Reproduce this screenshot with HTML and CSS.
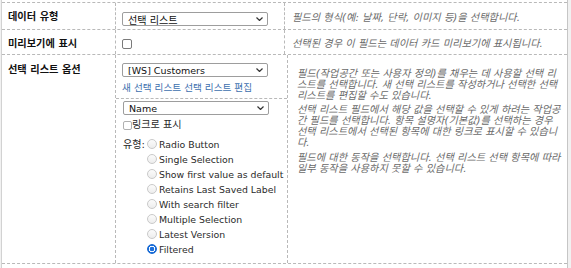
FILE: index.html
```html
<!DOCTYPE html>
<html lang="ko">
<head>
<meta charset="utf-8">
<link rel="stylesheet" href="styles.css">
</head>
<body>
<div class="frame">
  <div class="row row1">
    <div class="label">데이터 유형</div>
    <div class="mid">
      <div class="select"><span class="ko">선택 리스트</span><svg class="chev" width="7" height="4" viewBox="0 0 7 4"><polyline points="0.5,0.5 3.5,3.5 6.5,0.5"/></svg></div>
    </div>
    <div class="desc"><p>필드의 형식(예: 날짜, 단락, 이미지 등)을 선택합니다.</p></div>
  </div>
  <div class="row row2">
    <div class="label">미리보기에 표시</div>
    <div class="mid"><span class="checkbox"></span></div>
    <div class="desc"><p>선택된 경우 이 필드는 데이터 카드 미리보기에 표시됩니다.</p></div>
  </div>
  <div class="row row3">
    <div class="label">선택 리스트 옵션</div>
    <div class="mid">
      <div class="sub sub1">
        <div class="select"><span>[WS] Customers</span><svg class="chev" width="7" height="4" viewBox="0 0 7 4"><polyline points="0.5,0.5 3.5,3.5 6.5,0.5"/></svg></div>
        <div class="links"><a>새 선택 리스트</a> <a>선택 리스트 편집</a></div>
      </div>
      <div class="sub sub2">
        <div class="select"><span>Name</span><svg class="chev" width="7" height="4" viewBox="0 0 7 4"><polyline points="0.5,0.5 3.5,3.5 6.5,0.5"/></svg></div>
        <div class="check-row"><span class="checkbox small"></span><span class="ko">링크로 표시</span></div>
        <div class="types">
          <span class="types-label">유형:</span>
          <div class="radios">
            <div class="radio-item"><span class="radio"></span><span>Radio Button</span></div>
            <div class="radio-item"><span class="radio"></span><span>Single Selection</span></div>
            <div class="radio-item"><span class="radio"></span><span>Show first value as default</span></div>
            <div class="radio-item"><span class="radio"></span><span>Retains Last Saved Label</span></div>
            <div class="radio-item"><span class="radio"></span><span>With search filter</span></div>
            <div class="radio-item"><span class="radio"></span><span>Multiple Selection</span></div>
            <div class="radio-item"><span class="radio"></span><span>Latest Version</span></div>
            <div class="radio-item"><span class="radio checked"></span><span>Filtered</span></div>
          </div>
        </div>
      </div>
    </div>
    <div class="desc">
      <p>필드(작업공간 또는 사용자 정의)를 채우는 데 사용할 선택 리스트를 선택합니다. 새 선택 리스트를 작성하거나 선택한 선택 리스트를 편집할 수도 있습니다.</p>
      <p>선택 리스트 필드에서 해당 값을 선택할 수 있게 하려는 작업공간 필드를 선택합니다. 항목 설명자(기본값)를 선택하는 경우 선택 리스트에서 선택된 항목에 대한 링크로 표시할 수 있습니다.</p>
      <p>필드에 대한 동작을 선택합니다. 선택 리스트 선택 항목에 따라 일부 동작을 사용하지 못할 수 있습니다.</p>
    </div>
  </div>
</div>
</body>
</html>
```

FILE: styles.css
```css
* { box-sizing: border-box; }
html, body { margin: 0; padding: 0; }
body {
  width: 571px;
  height: 268px;
  overflow: hidden;
  background: #f1f1f1;
  font-family: "DejaVu Sans", "Noto Sans CJK KR", sans-serif;
  font-size: 9.5px;
  color: #2a2a2a;
}
.ko { font-size: 10.1px; }
.frame {
  margin-left: 1px;
  width: 567px;
  height: 268px;
  background: #fff;
  border-left: 1px solid #d2d2d2;
  border-right: 1px solid #c6c6c6;
  padding-top: 2px;
}
.row {
  display: flex;
  border-top: 1px dashed #b9b9b9;
}
.row3 { border-bottom: 1px dashed #b9b9b9; }
.label {
  width: 114px;
  flex: none;
  border-right: 1px dashed #b9b9b9;
  padding-left: 6px;
  font-weight: bold;
  font-size: 10.2px;
  line-height: 14px;
  color: #111;
}
.mid {
  width: 169px;
  flex: none;
  border-right: 1px dashed #b9b9b9;
  padding-left: 6px;
}
.desc {
  flex: 1;
  padding-left: 7px;
  padding-right: 3px;
  color: #6a6a6a;
  font-style: italic;
  font-size: 10.2px;
  line-height: 11px;
}
.desc p { margin: 0; }

.row1 .label { padding-top: 7px; }
.row1 .mid { padding-top: 9px; padding-bottom: 3px; }
.row1 .desc { padding-top: 9px; }

.row2 .label { padding-top: 7px; }
.row2 .mid { padding-top: 9px; padding-bottom: 5px; }
.row2 .desc { padding-top: 8px; }

.row3 .label { padding-top: 8px; }
.row3 .mid { width: 172px; padding-left: 0; }
.row3 .desc { padding-top: 12.5px; padding-left: 9px; padding-right: 3.5px; }
.row3 .desc p + p { margin-top: 3.5px; }

.select {
  width: 146px;
  height: 14px;
  display: flex;
  align-items: center;
  justify-content: space-between;
  border: 1px solid #9d9d9d;
  border-radius: 2px;
  padding: 0 4px 0 5px;
  background: #fff;
  color: #111;
}
.chev { display: block; }
.chev polyline { fill: none; stroke: #333; stroke-width: 1.2; }

.checkbox {
  display: block;
  width: 10px;
  height: 10px;
  border: 1px solid #7a7a7a;
  border-radius: 2px;
  background: #fff;
}
.checkbox.small {
  width: 9px;
  height: 9px;
  border-color: #b0b0b0;
}

.sub { padding-left: 6px; }
.sub1 {
  padding-top: 8px;
  padding-bottom: 5px;
  border-bottom: 1px dashed #b9b9b9;
}
.links {
  margin-top: 6px;
  font-size: 9.6px;
  line-height: 10px;
  color: #3d6fae;
}
.sub2 {
  padding-top: 2px;
  padding-left: 7px;
  padding-bottom: 6.5px;
}
.check-row {
  display: flex;
  align-items: center;
  margin-top: 5px;
  height: 10px;
  line-height: 10px;
}
.types {
  display: flex;
  align-items: flex-start;
  margin-top: 6.5px;
}
.types-label {
  width: 24px;
  flex: none;
  font-size: 10.1px;
  line-height: 15px;
}
.radio-item {
  display: flex;
  align-items: center;
  gap: 2px;
  height: 15px;
  font-size: 9.35px;
}
.radio {
  display: block;
  width: 10px;
  height: 10px;
  border-radius: 50%;
  border: 1px solid #c9c9c9;
  background: linear-gradient(#fbfbfb, #ededed);
}
.radio.checked {
  border: 1px solid #1566d0;
  background: radial-gradient(circle, #1a6fdc 0 2px, #fff 2.6px 3px, #1a6fdc 3.5px);
}
```
